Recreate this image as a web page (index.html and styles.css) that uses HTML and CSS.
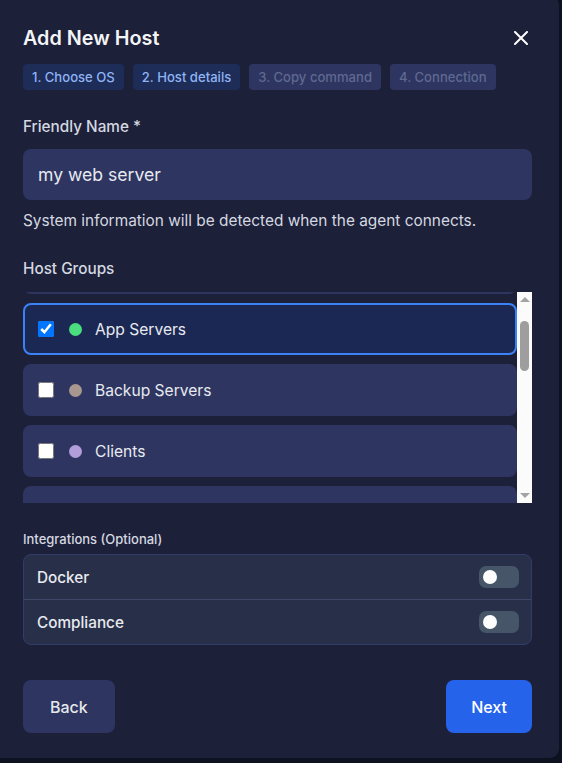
FILE: index.html
```html
<!DOCTYPE html>
<html lang="en">
<head>
    <meta charset="UTF-8">
    <meta name="viewport" content="width=device-width, initial-scale=1.0">
    <title>Add New Host</title>
    <link rel="stylesheet" href="styles.css">
</head>
<body>

<div class="modal">
    <div class="modal-header">
        <h2 class="modal-title">Add New Host</h2>
        <button class="close-btn" aria-label="Close">
            <svg width="14" height="14" viewBox="0 0 14 14">
                <path d="M1 1L13 13M13 1L1 13" stroke="#ffffff" stroke-width="2" stroke-linecap="round"/>
            </svg>
        </button>
    </div>

    <div class="steps">
        <span class="step done">1. Choose OS</span>
        <span class="step done">2. Host details</span>
        <span class="step">3. Copy command</span>
        <span class="step">4. Connection</span>
    </div>

    <label class="field-label" for="friendlyName">Friendly Name *</label>
    <input type="text" id="friendlyName" class="text-input" value="my web server">
    <p class="hint">System information will be detected when the agent connects.</p>

    <div class="field-label groups-label">Host Groups</div>
    <div class="group-box">
        <div class="group-list" id="groupList">
            <label class="group-item"><input type="checkbox"><span class="dot" style="background:#60a5fa"></span>Analytics</label>
            <label class="group-item selected"><input type="checkbox" checked><span class="dot" style="background:#4ade80"></span>App Servers</label>
            <label class="group-item"><input type="checkbox"><span class="dot" style="background:#a8978f"></span>Backup Servers</label>
            <label class="group-item"><input type="checkbox"><span class="dot" style="background:#b39ddb"></span>Clients</label>
            <label class="group-item"><input type="checkbox"><span class="dot" style="background:#f59e0b"></span>Database Servers</label>
            <label class="group-item"><input type="checkbox"><span class="dot" style="background:#f87171"></span>DMZ</label>
            <label class="group-item"><input type="checkbox"><span class="dot" style="background:#22d3ee"></span>Edge Nodes</label>
            <label class="group-item"><input type="checkbox"><span class="dot" style="background:#a3e635"></span>File Servers</label>
            <label class="group-item"><input type="checkbox"><span class="dot" style="background:#818cf8"></span>Kubernetes</label>
            <label class="group-item"><input type="checkbox"><span class="dot" style="background:#fb923c"></span>Load Balancers</label>
            <label class="group-item"><input type="checkbox"><span class="dot" style="background:#f472b6"></span>Monitoring</label>
            <label class="group-item"><input type="checkbox"><span class="dot" style="background:#facc15"></span>Staging</label>
            <label class="group-item"><input type="checkbox"><span class="dot" style="background:#34d399"></span>Web Servers</label>
        </div>
        <!-- classic scrollbar for the group list -->
        <div class="scrollbar">
            <span class="scroll-arrow"><span class="arrow-up"></span></span>
            <span class="scroll-thumb"></span>
            <span class="scroll-arrow bottom"><span class="arrow-down"></span></span>
        </div>
    </div>

    <div class="small-label">Integrations (Optional)</div>
    <div class="integrations">
        <div class="integration-row">
            <span>Docker</span>
            <span class="toggle"><span class="knob"></span></span>
        </div>
        <div class="integration-row">
            <span>Compliance</span>
            <span class="toggle"><span class="knob"></span></span>
        </div>
    </div>

    <div class="modal-footer">
        <button class="btn btn-back">Back</button>
        <button class="btn btn-next">Next</button>
    </div>
</div>

<script>
    document.getElementById('groupList').scrollTop = 50;
</script>

</body>
</html>
```

FILE: styles.css
```css
body {
    margin: 0;
    background-color: #0e1120;
    font-family: Inter, "Noto Sans", sans-serif;
    color: #e5e7eb;
    height: 763px;
    overflow: hidden;
}

.modal {
    box-sizing: border-box;
    width: 559px;
    height: 762px;
    margin-top: -4px;
    padding: 28px 27px 0 23px;
    background-color: #1c2039;
    border-radius: 0 9px 9px 0;
}

.modal-header {
    display: flex;
    justify-content: space-between;
    align-items: center;
    height: 28px;
}

.modal-title {
    margin: 0;
    font-size: 19.8px;
    line-height: 28px;
    font-weight: 600;
    color: #f3f4f6;
}

.close-btn {
    background: none;
    border: none;
    padding: 0;
    margin-right: 4px;
    width: 14px;
    height: 14px;
    display: flex;
    cursor: pointer;
}

.steps {
    display: flex;
    gap: 9px;
    margin-top: 12px;
}

.step {
    display: inline-block;
    height: 26px;
    line-height: 26px;
    padding: 0 9px;
    border-radius: 4px;
    font-size: 13.1px;
    font-weight: 500;
    background-color: #2d3560;
    color: #5f6990;
}

.step.done {
    background-color: #1e2c58;
    color: #8fb4f4;
}

.field-label {
    display: block;
    margin-top: 27px;
    font-size: 15.3px;
    line-height: 20px;
    font-weight: 500;
    color: #d5d8e0;
}

.text-input {
    display: block;
    box-sizing: border-box;
    width: 100%;
    height: 51px;
    margin-top: 12px;
    padding: 0 15px;
    border: none;
    border-radius: 8px;
    background-color: #2d3560;
    color: #e8eaf0;
    font-family: inherit;
    font-size: 17.6px;
    outline: none;
}

.hint {
    margin: 11px 0 0 0;
    font-size: 15.4px;
    line-height: 20px;
    color: #d5d8e0;
}

.groups-label {
    margin-top: 28px;
}

.group-box {
    display: flex;
    height: 211px;
    margin-top: 13px;
}

.group-list {
    flex: 1;
    overflow: hidden;
    display: flex;
    flex-direction: column;
    gap: 9px;
}

.group-item {
    flex: 0 0 auto;
    box-sizing: border-box;
    display: flex;
    align-items: center;
    height: 52px;
    padding: 0 13px;
    border: 2px solid transparent;
    border-radius: 8px;
    background-color: #2d3560;
    font-size: 15.6px;
    color: #e8eaf0;
    cursor: pointer;
}

.group-item.selected {
    background-color: #1b2853;
    border-color: #3b82f6;
}

.group-item input {
    width: 16px;
    height: 16px;
    margin: 0 15px 0 0;
}

.dot {
    width: 13px;
    height: 13px;
    border-radius: 50%;
    margin-right: 13px;
}

.scrollbar {
    width: 15px;
    background-color: #fbfbfb;
    display: flex;
    flex-direction: column;
    align-items: center;
}

.scroll-arrow {
    display: flex;
    justify-content: center;
    align-items: center;
    width: 15px;
    height: 15px;
}

.scroll-arrow.bottom {
    margin-top: auto;
}

.arrow-up {
    border-left: 5px solid transparent;
    border-right: 5px solid transparent;
    border-bottom: 5px solid #a3a3a3;
}

.arrow-down {
    border-left: 5px solid transparent;
    border-right: 5px solid transparent;
    border-top: 5px solid #a3a3a3;
}

.scroll-thumb {
    width: 9px;
    height: 50px;
    margin-top: 14px;
    border-radius: 5px;
    background-color: #9e9e9e;
}

.small-label {
    margin-top: 27px;
    font-size: 13px;
    line-height: 18px;
    font-weight: 500;
    color: #d5d8e0;
}

.integrations {
    margin-top: 6px;
    border: 1px solid #323c68;
    border-radius: 8px;
    background-color: #283049;
}

.integration-row {
    display: flex;
    justify-content: space-between;
    align-items: center;
    height: 44px;
    padding: 0 12px 0 13px;
    font-size: 15.3px;
    font-weight: 500;
    color: #e8eaf0;
}

.integration-row + .integration-row {
    border-top: 1px solid #3e4868;
}

.toggle {
    width: 40px;
    height: 22px;
    border-radius: 7px;
    background-color: #475569;
    display: flex;
    align-items: center;
    padding-left: 4px;
    box-sizing: border-box;
}

.knob {
    width: 14px;
    height: 14px;
    border-radius: 50%;
    background-color: #ffffff;
}

.modal-footer {
    display: flex;
    justify-content: space-between;
    margin-top: 35px;
}

.btn {
    height: 53px;
    padding: 0 27px;
    border: none;
    border-radius: 8px;
    font-family: inherit;
    font-size: 16px;
    font-weight: 500;
    cursor: pointer;
}

.btn-back {
    background-color: #2d3560;
    color: #e5e7eb;
}

.btn-next {
    padding: 0 25px;
    background-color: #2563eb;
    color: #ffffff;
}
```
